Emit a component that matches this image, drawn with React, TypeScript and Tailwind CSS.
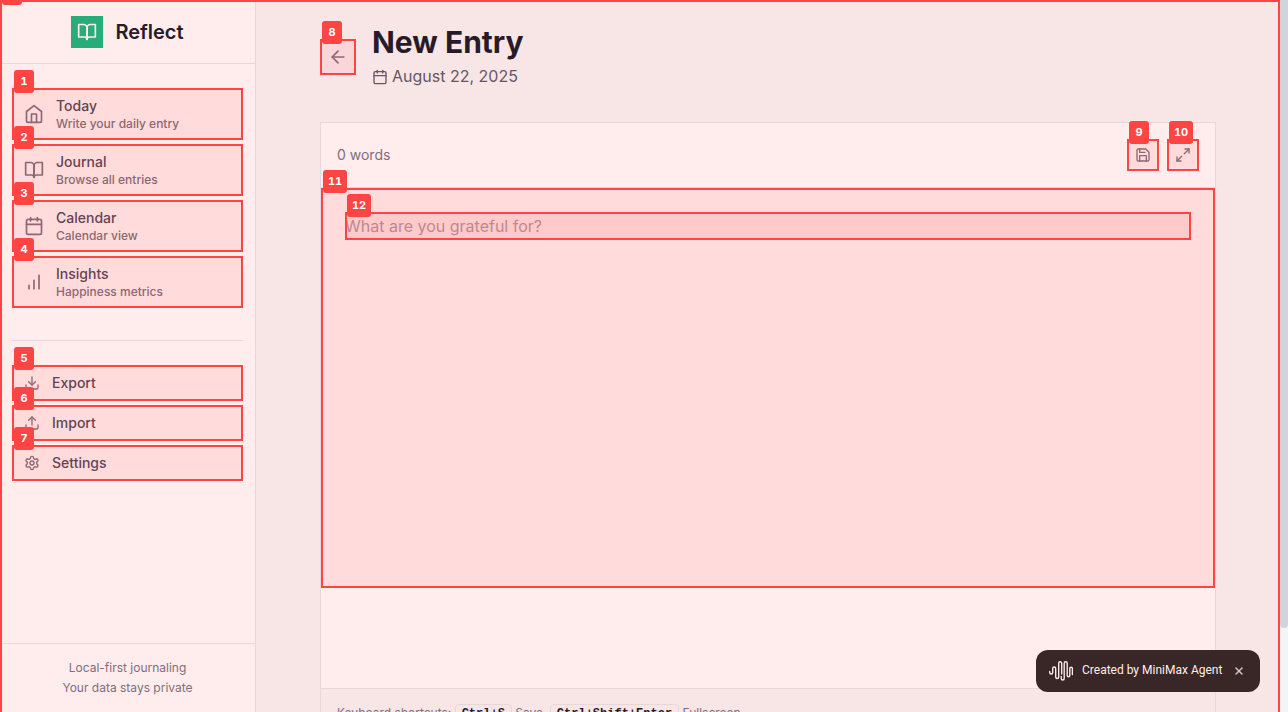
import type { ReactNode } from "react";
import { ArrowLeft, Calendar, Download, Maximize2, Upload, X } from "lucide-react";

function Mark({ n }: { n: number }) {
  return (
    <span className="pointer-events-none absolute -top-5 left-0 z-10 flex h-[23px] min-w-5 items-center justify-center rounded-[3px] bg-[#ff4444] px-[5px] text-[11px] leading-none font-bold text-white tabular-nums">
      {n}
    </span>
  );
}

function Icon({ className, children }: { className: string; children: ReactNode }) {
  return (
    <svg
      className={className}
      viewBox="0 0 24 24"
      fill="none"
      stroke="currentColor"
      strokeWidth="2"
      strokeLinecap="round"
      strokeLinejoin="round"
      aria-hidden="true"
    >
      {children}
    </svg>
  );
}

function HomeIcon() {
  return (
    <Icon className="size-5">
      <path d="m3 9 9-7 9 7v11a2 2 0 0 1-2 2H5a2 2 0 0 1-2-2z" />
      <path d="M9 22V12h6v10" />
    </Icon>
  );
}

function BookIcon() {
  return (
    <Icon className="size-5">
      <path d="M2 3h6a4 4 0 0 1 4 4v14a3 3 0 0 0-3-3H2z" />
      <path d="M22 3h-6a4 4 0 0 0-4 4v14a3 3 0 0 1 3-3h7z" />
    </Icon>
  );
}

function BarsIcon() {
  return (
    <Icon className="size-5">
      <path d="M12 20V10M18 20V4M6 20v-4" />
    </Icon>
  );
}

function SaveIcon() {
  return (
    <Icon className="size-4">
      <path d="M19 21H5a2 2 0 0 1-2-2V5a2 2 0 0 1 2-2h11l5 5v11a2 2 0 0 1-2 2z" />
      <path d="M17 21v-8H7v8M7 3v5h8" />
    </Icon>
  );
}

function GearIcon() {
  return (
    <Icon className="size-4">
      <path d="M12.22 2h-.44a2 2 0 0 0-2 2v.18a2 2 0 0 1-1 1.73l-.43.25a2 2 0 0 1-2 0l-.15-.08a2 2 0 0 0-2.73.73l-.22.38a2 2 0 0 0 .73 2.73l.15.1a2 2 0 0 1 1 1.72v.51a2 2 0 0 1-1 1.74l-.15.09a2 2 0 0 0-.73 2.73l.22.38a2 2 0 0 0 2.73.73l.15-.08a2 2 0 0 1 2 0l.43.25a2 2 0 0 1 1 1.73V20a2 2 0 0 0 2 2h.44a2 2 0 0 0 2-2v-.18a2 2 0 0 1 1-1.73l.43-.25a2 2 0 0 1 2 0l.15.08a2 2 0 0 0 2.73-.73l.22-.39a2 2 0 0 0-.73-2.73l-.15-.08a2 2 0 0 1-1-1.74v-.5a2 2 0 0 1 1-1.74l.15-.09a2 2 0 0 0 .73-2.73l-.22-.38a2 2 0 0 0-2.73-.73l-.15.08a2 2 0 0 1-2 0l-.43-.25a2 2 0 0 1-1-1.73V4a2 2 0 0 0-2-2z" />
      <circle cx="12" cy="12" r="3" />
    </Icon>
  );
}

function Wave() {
  return (
    <svg
      className="h-5 w-6"
      viewBox="0 0 24 20"
      fill="none"
      stroke="currentColor"
      strokeWidth="1.35"
      strokeLinecap="round"
      aria-hidden="true"
    >
      <path d="M.7 10.500v1a1.500 1.500 0 0 0 3 0V7.500a1.500 1.500 0 0 1 3 0v8.500a1.500 1.500 0 0 0 3 0V2.200a1.500 1.500 0 0 1 3 0V13" />
      <path d="M12.200 15.500v2a1.500 1.500 0 0 0 3 0V2.200a1.500 1.500 0 0 1 3 0v12.300a1.300 1.300 0 0 0 2.600 0V7.500a1.300 1.300 0 0 1 2.600 0v6" />
    </svg>
  );
}

const views: { n: number; title: string; note: string; icon: ReactNode }[] = [
  { n: 1, title: "Today", note: "Write your daily entry", icon: <HomeIcon /> },
  { n: 2, title: "Journal", note: "Browse all entries", icon: <BookIcon /> },
  { n: 3, title: "Calendar", note: "Calendar view", icon: <Calendar className="size-5" /> },
  { n: 4, title: "Insights", note: "Happiness metrics", icon: <BarsIcon /> },
];

const tools: { n: number; title: string; icon: ReactNode }[] = [
  { n: 5, title: "Export", icon: <Download className="size-4" /> },
  { n: 6, title: "Import", icon: <Upload className="size-4" /> },
  { n: 7, title: "Settings", icon: <GearIcon /> },
];

function Sidebar() {
  return (
    <aside className="flex w-64 shrink-0 flex-col border-r border-[#e9d6da] bg-[#ffecec]">
      <div className="flex h-16 items-center justify-center gap-3 border-b border-[#e9d6da]">
        <span className="flex size-8 items-center justify-center bg-[#28ad7a] text-[#ffecec]">
          <BookIcon />
        </span>
        <span className="text-xl font-semibold text-[#281a29]">Reflect</span>
      </div>
      <nav className="flex-1 px-3 pt-6">
        <div className="flex flex-col gap-1">
          {views.map((v) => (
            <a
              key={v.n}
              href="#"
              className="relative flex items-center gap-3 border-2 border-[#ff4444] bg-[#ffdbdb] px-2.5 py-1.5 text-[#8d6773]"
            >
              <Mark n={v.n} />
              {v.icon}
              <span className="flex flex-col">
                <span className="text-sm font-medium text-[#634453]">{v.title}</span>
                <span className="text-xs font-medium text-[#8d6773]">{v.note}</span>
              </span>
            </a>
          ))}
        </div>
        <div className="mt-8 flex flex-col gap-1 border-t border-[#e9d6da] pt-6">
          {tools.map((t) => (
            <button
              key={t.n}
              type="button"
              className="relative flex items-center gap-3 border-2 border-[#ff4444] bg-[#ffdbdb] px-2.5 py-1.5 text-sm font-medium text-[#8d6773]"
            >
              <Mark n={t.n} />
              {t.icon}
              <span className="text-[#634453]">{t.title}</span>
            </button>
          ))}
        </div>
      </nav>
      <footer className="flex flex-col gap-1 border-t border-[#e9d6da] p-4 text-center text-xs text-[#806f7d]">
        <p>Local-first journaling</p>
        <p>Your data stays private</p>
      </footer>
    </aside>
  );
}

function Editor() {
  return (
    <section className="border border-[#e9d6da] bg-[#ffecec]">
      <div className="flex items-center justify-between border-b border-[#e9d6da] p-4">
        <span className="text-sm text-[#806f7d]">0 words</span>
        <div className="flex gap-2">
          <button
            type="button"
            aria-label="Save"
            className="relative flex size-8 items-center justify-center border-2 border-[#ff4444] bg-[#ffdbdb] text-[#8d6773]"
          >
            <Mark n={9} />
            <SaveIcon />
          </button>
          <button
            type="button"
            aria-label="Fullscreen"
            className="relative flex size-8 items-center justify-center border-2 border-[#ff4444] bg-[#ffdbdb] text-[#8d6773]"
          >
            <Mark n={10} />
            <Maximize2 className="size-4" />
          </button>
        </div>
      </div>
      <div className="h-[500px]">
        <div className="relative h-[400px] border-2 border-[#ff4444] bg-[#ffdbdb] p-[22px]">
          <Mark n={11} />
          <div className="relative">
            <input
              type="text"
              aria-label="Journal entry"
              placeholder="What are you grateful for?"
              className="block h-7 w-full border-2 border-[#ff4444] bg-[#ffcaca] text-base text-[#5d414e] outline-none -indent-0.5 placeholder:text-[#bf8790]"
            />
            <div className="absolute top-0.5 left-0.5">
              <Mark n={12} />
            </div>
          </div>
        </div>
      </div>
      <div className="border-t border-[#e9d6da] bg-[#f8e6e6] p-4 text-xs text-[#806f7d]">
        Keyboard shortcuts:{" "}
        <kbd className="rounded border border-[#e9d6da] px-1.5 py-0.5 font-['Liberation_Mono',monospace] text-xs font-bold text-[#281a29]">
          Ctrl+S
        </kbd>{" "}
        Save,{" "}
        <kbd className="rounded border border-[#e9d6da] px-1.5 py-0.5 font-['Liberation_Mono',monospace] text-xs font-bold text-[#281a29]">
          Ctrl+Shift+Enter
        </kbd>{" "}
        Fullscreen
      </div>
    </section>
  );
}

export default function App() {
  return (
    <div className="relative flex h-screen overflow-hidden bg-[#f8e6e6] font-['Inter',sans-serif]">
      <Sidebar />
      <main className="min-w-0 flex-1 overflow-hidden px-6 pt-6">
        <div className="mx-auto max-w-4xl">
          <header className="mb-8 flex items-center gap-4">
            <button
              type="button"
              aria-label="Back"
              className="relative flex size-9 items-center justify-center border-2 border-[#ff4444] bg-[#f9d6d9] text-[#8d6773]"
            >
              <Mark n={8} />
              <ArrowLeft className="size-5" />
            </button>
            <div className="flex flex-col gap-1">
              <h1 className="text-3xl leading-9 font-bold text-[#281a29]">New Entry</h1>
              <p className="flex items-center gap-1 text-base text-[#655663]">
                <Calendar className="size-4" />
                <span className="pb-0.5">August 22, 2025</span>
              </p>
            </div>
          </header>
          <Editor />
        </div>
      </main>
      <div className="w-2 shrink-0 bg-[#f3f4f6]">
        <div className="h-[88.2%] rounded-b bg-[#d1d5db]" />
      </div>
      <div className="pointer-events-none absolute inset-y-0 right-2 left-0 border-2 border-b-0 border-[#ff4444]">
        <span className="absolute -top-0.5 left-0 h-[5px] w-5 rounded-b-[3px] bg-[#ff4444]" />
      </div>
      <div className="absolute right-7 bottom-5 flex h-[42px] w-56 items-center rounded-xl bg-[#392626] px-[13px] font-['Roboto',sans-serif] text-xs text-[#ffecec]">
        <Wave />
        <span className="ml-[9px] flex-1 pb-0.5 whitespace-nowrap">Created by MiniMax Agent</span>
        <button type="button" aria-label="Close" className="mr-0.5 text-[#d6c4c4]">
          <X className="size-3" strokeWidth={3} />
        </button>
      </div>
    </div>
  );
}
